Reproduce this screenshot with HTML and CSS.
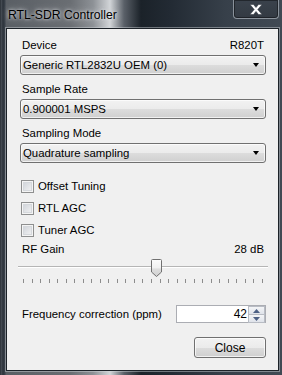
FILE: index.html
```html
<!DOCTYPE html>
<html lang="en">
<head>
  <meta charset="UTF-8" />
  <title>RTL-SDR Controller</title>
  <link rel="stylesheet" href="styles.css">
</head>
<body>
  <div class="window">
    <div class="titlebar">
      <span class="title">RTL-SDR Controller</span>
      <div class="close-btn">
        <svg width="14" height="11" viewBox="0 0 14 11"><path d="M1 0.5h3.5l2.5 3 2.5-3h3.5l-4.2 5 4.2 5h-3.5l-2.5-3-2.5 3h-3.5l4.2-5z" fill="#fff" stroke="#3a424c" stroke-width="0.6"/></svg>
      </div>
    </div>

    <div class="client">
      <!-- Device -->
      <div class="label-row"><span>Device</span><span>R820T</span></div>
      <div class="combo"><span>Generic RTL2832U OEM (0)</span><i class="arrow"></i></div>

      <div class="label-row"><span>Sample Rate</span></div>
      <div class="combo"><span>0.900001 MSPS</span><i class="arrow"></i></div>

      <div class="label-row mode"><span>Sampling Mode</span></div>
      <div class="combo"><span>Quadrature sampling</span><i class="arrow"></i></div>

      <!-- Checkboxes -->
      <div class="checks">
        <div class="check"><span class="box"></span>Offset Tuning</div>
        <div class="check"><span class="box"></span>RTL AGC</div>
        <div class="check"><span class="box"></span>Tuner AGC</div>
      </div>

      <div class="label-row gain"><span>RF Gain</span><span>28 dB</span></div>
      <div class="slider">
        <div class="track"></div>
        <svg class="thumb" width="11" height="18" viewBox="0 0 11 18">
          <defs>
            <linearGradient id="tg" x1="0" y1="0" x2="0" y2="1">
              <stop offset="0" stop-color="#fcfcfc"/>
              <stop offset="0.5" stop-color="#f0f0f0"/>
              <stop offset="0.55" stop-color="#dedede"/>
              <stop offset="1" stop-color="#d0d0d0"/>
            </linearGradient>
          </defs>
          <path d="M1.5 0.5h8a1 1 0 0 1 1 1v11.5l-5 4.5l-5-4.5v-11.5a1 1 0 0 1 1-1z" fill="url(#tg)" stroke="#707070"/>
        </svg>
        <div class="ticks" id="ticks"></div>
      </div>

      <div class="freq-row">
        <span>Frequency correction (ppm)</span>
        <div class="numeric">
          <span class="value">42</span>
          <div class="spin">
            <div class="spin-btn"><svg width="7" height="4" viewBox="0 0 7 4"><path d="M0 4L3.5 0L7 4z" fill="#4d6185"/></svg></div>
            <div class="spin-btn"><svg width="7" height="4" viewBox="0 0 7 4"><path d="M0 0L3.5 4L7 0z" fill="#4d6185"/></svg></div>
          </div>
        </div>
      </div>

      <div class="buttons">
        <div class="button">Close</div>
      </div>
    </div>
  </div>

  <script>
    const ticks = document.getElementById('ticks');
    for (let i = 0; i < 29; i++) {
      const t = document.createElement('i');
      ticks.appendChild(t);
    }
  </script>
</body>
</html>
```

FILE: styles.css
```css
body { margin: 0; font-family: "Liberation Sans", Arial, sans-serif; font-size: 11.4px; color: #000; }

.window {
  width: 282px; height: 375px; box-sizing: border-box;
  padding: 0 3px 4px 6px;
  display: flex; flex-direction: column;
  background:
    linear-gradient(90deg, #1a2026 0, #4a5058 1px, #2c333b 3px, #3c434c 5px, transparent 6px),
    linear-gradient(90deg, #585d63 0%, #6a6e73 25%, #8d9196 33%, #d2d5d8 39%, #5a6068 44%, #1b2229 50%, #222a33 60%, #37404a 80%, #414a54 100%);
}

.titlebar { height: 28px; display: flex; align-items: flex-start; position: relative; }
.title {
  margin: 8px 0 0 2px; font-size: 12.2px; color: #000;
  text-shadow: 0 0 6px rgba(230, 232, 235, 0.9), 0 0 3px rgba(230, 232, 235, 0.9);
}
.close-btn {
  position: absolute; right: 0; top: 0;
  width: 44px; height: 18px;
  border: 1px solid #8a929b; border-top: none; border-radius: 0 0 4px 4px;
  background: linear-gradient(#3a424c, #333a43);
  box-shadow: inset 0 0 0 1px rgba(0, 0, 0, 0.4);
  display: flex; align-items: center; justify-content: center;
}

.client {
  flex: 1; background: #f0f0f0;
  border: 1px solid #1c2228;
  box-shadow: 0 0 0 1px rgba(210, 215, 220, 0.45);
  padding: 8px 12px 0 13px;
  display: flex; flex-direction: column;
}

.label-row { height: 16px; display: flex; align-items: center; justify-content: space-between; padding: 0 2px 0 2px; margin-bottom: 2px; }
.label-row + .combo + .label-row { margin-top: 6px; }
.label-row.mode { margin-top: 5px; margin-bottom: 2px; }

.combo {
  height: 20px; box-sizing: border-box;
  border: 1px solid #707070; border-radius: 3px;
  background: linear-gradient(#f2f2f2 0%, #ebebeb 50%, #dddddd 50%, #cfcfcf 100%);
  display: flex; align-items: center; justify-content: space-between;
  padding: 0 6px 0 2px;
  box-shadow: inset 0 0 0 1px rgba(255, 255, 255, 0.7);
}
.arrow { width: 0; height: 0; border-left: 3.5px solid transparent; border-right: 3.5px solid transparent; border-top: 4px solid #000; }

.checks { margin-top: 12px; }
.check { height: 22px; display: flex; align-items: center; padding-left: 1px; }
.box {
  width: 11px; height: 11px; margin-right: 4px;
  border: 1px solid #8e8f8f;
  background: linear-gradient(135deg, #cbcfd5, #f6f6f6);
  box-shadow: inset 0 0 0 1px #f4f4f4, inset 0 0 0 2px #d5d8dc;
}
.label-row.gain { margin: 0; }

.slider { position: relative; height: 33px; margin: 0 -2px 0 -2px; }
.track { position: absolute; left: 0; right: 0; top: 9px; height: 1px; background: #b5b5b5; border-bottom: 1px solid #fff; }
.thumb { position: absolute; left: 133px; top: 2px; }
.ticks { position: absolute; left: 5px; right: 5px; top: 22px; height: 4px; display: flex; justify-content: space-between; }
.ticks i { width: 1px; height: 4px; background: #8c8c8c; }

.freq-row { display: flex; align-items: center; justify-content: space-between; margin-top: 15px; padding-left: 2px; }
.numeric {
  width: 90px; height: 18px; box-sizing: border-box;
  border: 1px solid #abadb3; background: #fff;
  display: flex; align-items: center; margin-right: 0px;
}
.value { flex: 1; text-align: right; font-size: 12px; padding-right: 1px; }
.spin { width: 17px; height: 16px; display: flex; flex-direction: column; }
.spin-btn {
  flex: 1; display: flex; align-items: center; justify-content: center;
  border: 1px solid #b8bcc4; background: linear-gradient(#f4f5f7, #dfe3ea);
  margin: 0 0 -1px 0;
}

.buttons { display: flex; justify-content: flex-end; margin-top: 14px; }
.button {
  width: 72px; height: 21px; box-sizing: border-box;
  border: 1px solid #707070; border-radius: 3px;
  background: linear-gradient(#f2f2f2 0%, #ebebeb 50%, #dddddd 50%, #cfcfcf 100%);
  box-shadow: inset 0 0 0 1px rgba(255, 255, 255, 0.7);
  display: flex; align-items: center; justify-content: center;
  font-size: 12px;
}
```
